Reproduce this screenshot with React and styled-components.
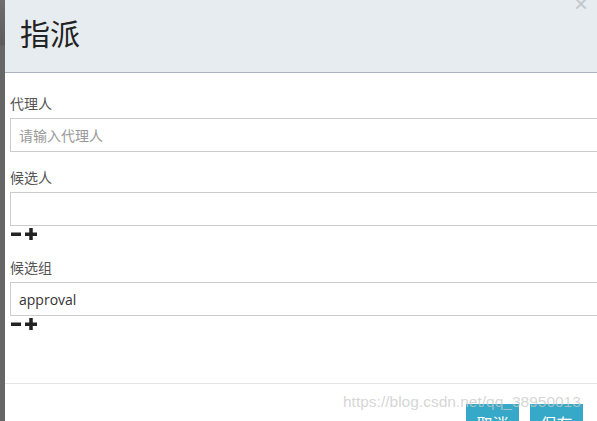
import React from "react";
import styled, { createGlobalStyle } from "styled-components";

const Global = createGlobalStyle`
  html, body { margin: 0; padding: 0; overflow: hidden; background: #fff; }
  body { font-family: "Open Sans", "Noto Sans CJK SC", "Liberation Sans", sans-serif; }
  * { box-sizing: border-box; }
`;

const Page = styled.div`
  display: flex;
  width: 597px;
  height: 421px;
  overflow: hidden;
`;

const Backdrop = styled.div`
  flex: 0 0 5px;
  background: linear-gradient(#6e6e6e 0px, #5c5c5c 45px, #666 46px, #666 100%);
`;

const Modal = styled.div`
  position: relative;
  flex: 0 0 640px;
  background: #fff;
  display: flex;
  flex-direction: column;
`;

const Header = styled.div`
  flex: 0 0 auto;
  height: 73px;
  background: #e7ecf0;
  border-bottom: 1px solid #a9b3c1;
  padding: 12px 0 0 15px;
`;

const Title = styled.h3`
  margin: 0;
  font-size: 30px;
  font-weight: 400;
  line-height: 40px;
  color: #222;
  font-family: "Noto Sans CJK SC", sans-serif;
`;

const Close = styled.span`
  position: absolute;
  left: 569px;
  top: -8px;
  font-size: 24px;
  font-family: "Liberation Sans", sans-serif;
  color: #c3c7cb;
  line-height: 24px;
`;

const Body = styled.div`
  flex: 0 0 auto;
  padding: 19px 0 0 5px;
  display: flex;
  flex-direction: column;
  height: 311px;
  border-bottom: 1px solid #e5e5e5;
`;

const Group = styled.div`
  display: flex;
  flex-direction: column;
  margin-bottom: ${(p) => p.$mb || 0}px;
`;

const Label = styled.label`
  font-size: 14px;
  line-height: 22px;
  color: #555;
  font-family: "Noto Sans CJK SC", sans-serif;
  margin-bottom: 4px;
`;

const Input = styled.input`
  height: 34px;
  width: 620px;
  border: 1px solid #ccc;
  padding: 0 8px;
  font-size: 14px;
  color: #333;
  font-family: "Open Sans", "Noto Sans CJK SC", sans-serif;
  outline: none;
  &::placeholder {
    color: #999;
    font-size: 14px;
    font-family: "Noto Sans CJK SC", sans-serif;
  }
`;

const Tools = styled.div`
  display: flex;
  align-items: center;
  gap: 3px;
  height: 16px;
  padding-left: 1px;
`;

const Footer = styled.div`
  flex: 0 0 auto;
  position: relative;
  display: flex;
  gap: 11px;
  padding: 20px 0 0 461px;
`;

const Btn = styled.button`
  width: 53px;
  height: 34px;
  background: #35a9c7;
  border: none;
  color: #fff;
  font-size: 16px;
  font-family: "Noto Sans CJK SC", sans-serif;
  padding: 0;
  line-height: 34px;
  padding-top: 2px;
`;

const Watermark = styled.span`
  position: absolute;
  left: 338px;
  top: 9px;
  font-family: "Liberation Sans", sans-serif;
  font-size: 15.5px;
  color: rgba(200, 200, 200, 0.75);
  pointer-events: none;
  z-index: 2;
`;

const Minus = () => (
  <svg width="11" height="12" viewBox="0 0 11 12">
    <rect x="0" y="4.5" width="10" height="3.5" fill="#222" />
  </svg>
);
const Plus = () => (
  <svg width="12" height="12" viewBox="0 0 12 12">
    <rect x="0" y="4.5" width="12" height="3.5" fill="#222" />
    <rect x="4.25" y="0" width="3.5" height="12" fill="#222" />
  </svg>
);

export default function App() {
  return (
    <>
      <Global />
      <Page>
        <Backdrop />
        <Modal>
          <Close>×</Close>
          <Header>
            <Title>指派</Title>
          </Header>
          <Body>
            <Group $mb={14}>
              <Label>代理人</Label>
              <Input placeholder="请输入代理人" />
            </Group>
            <Group $mb={14}>
              <Label>候选人</Label>
              <Input />
              <Tools>
                <Minus />
                <Plus />
              </Tools>
            </Group>
            <Group>
              <Label>候选组</Label>
              <Input defaultValue="approval" />
              <Tools>
                <Minus />
                <Plus />
              </Tools>
            </Group>
          </Body>
          <Footer>
            <Watermark>https://blog.csdn.net/qq_38950013</Watermark>
            <Btn>取消</Btn>
            <Btn>保存</Btn>
          </Footer>
        </Modal>
      </Page>
    </>
  );
}
